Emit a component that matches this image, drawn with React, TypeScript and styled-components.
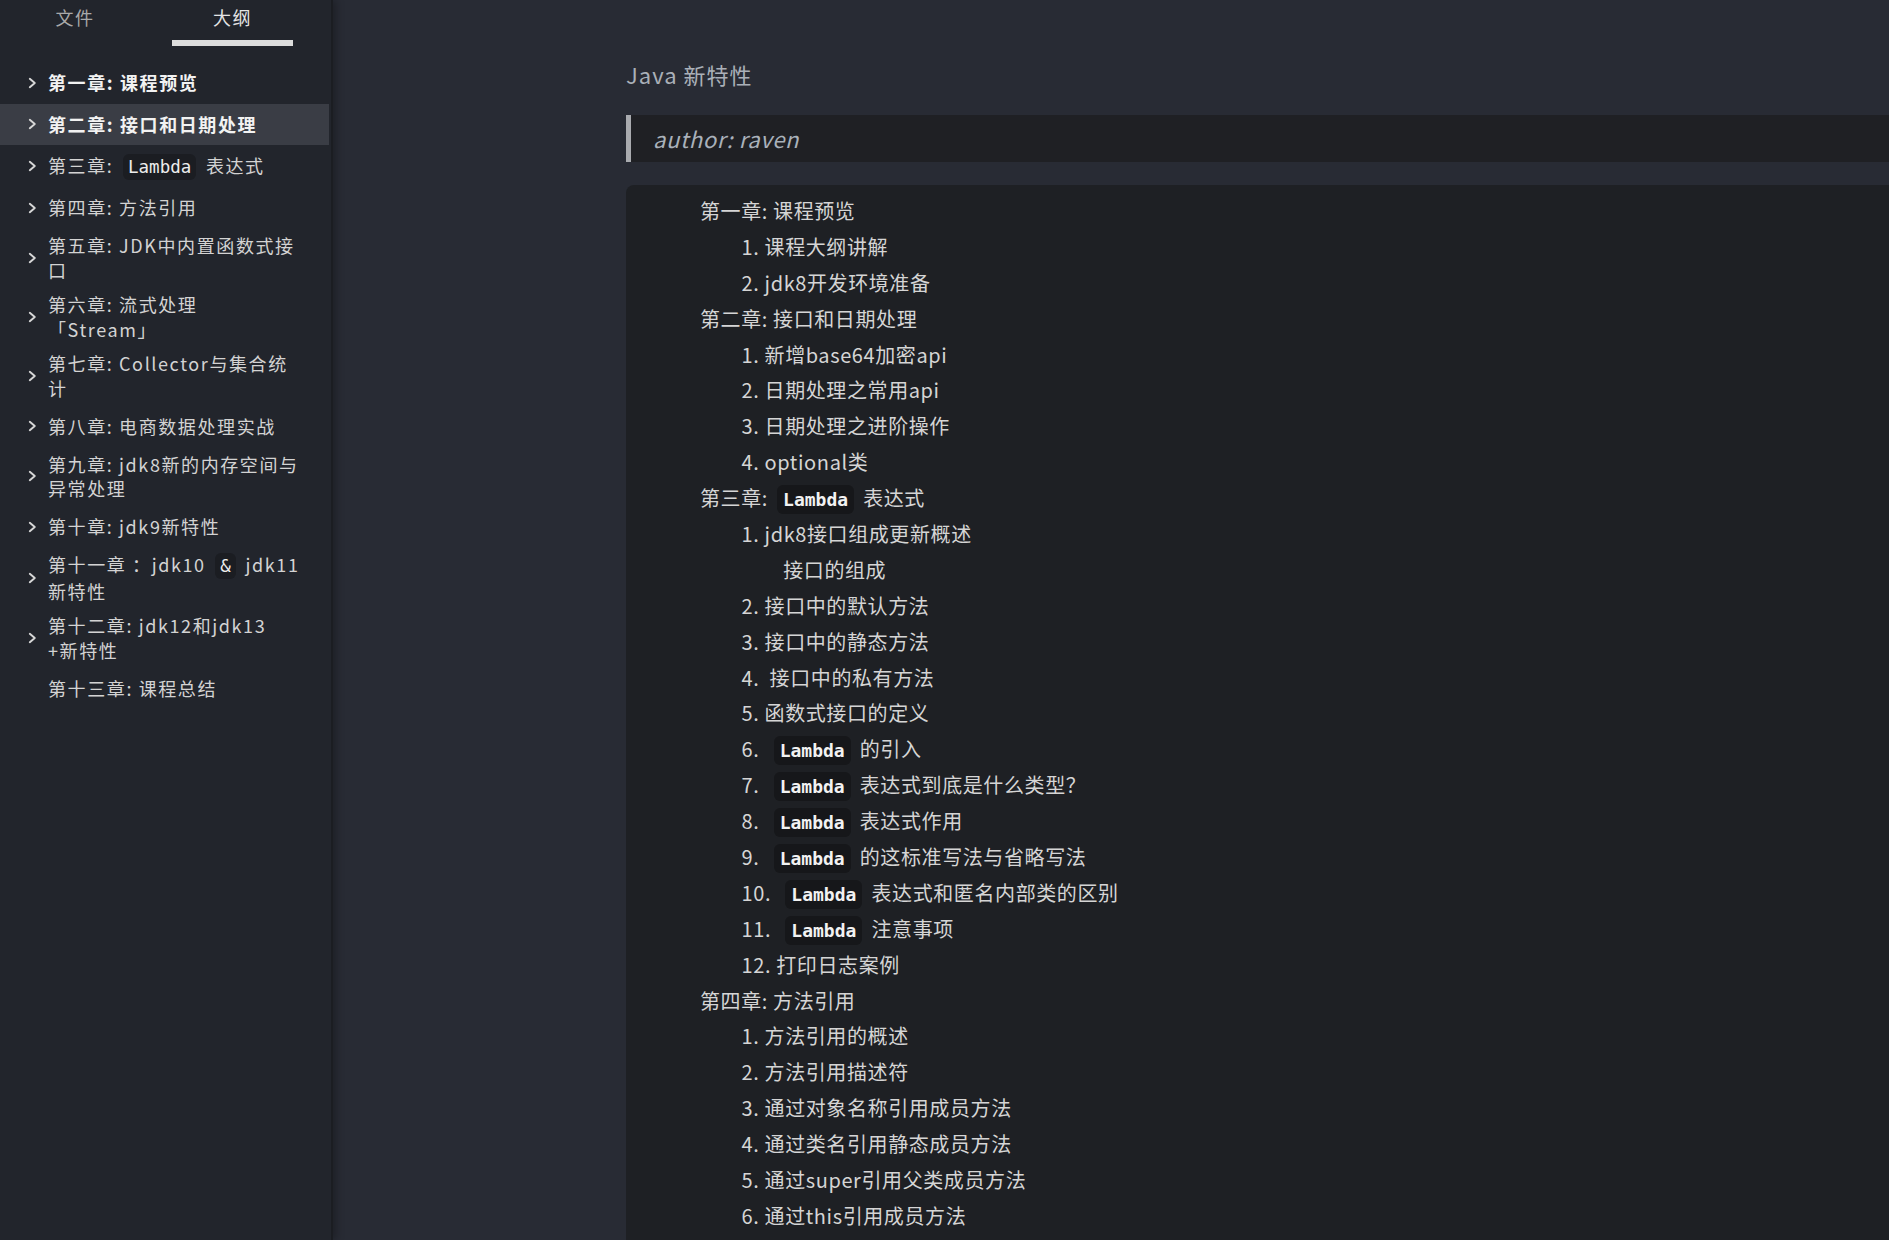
import React from "react";
import styled, { createGlobalStyle } from "styled-components";

const GlobalStyle = createGlobalStyle`
  html, body {
    margin: 0;
    padding: 0;
    background: #282b34;
    overflow: hidden;
  }
  * { box-sizing: border-box; }
`;

const Layout = styled.div`
  display: flex;
  width: 1889px;
  height: 1240px;
  overflow: hidden;
  background: #282b34;
  font-family: "Noto Sans CJK SC", "Noto Sans", sans-serif;
`;

const Sidebar = styled.aside`
  flex: 0 0 333px;
  width: 333px;
  background: #22252c;
  border-right: 2px solid #1b1d22;
  box-shadow: 3px 0 8px rgba(0, 0, 0, 0.28);
  position: relative;
  z-index: 1;
  display: flex;
  flex-direction: column;
`;

const Tabs = styled.div`
  display: flex;
  gap: 22px;
  height: 46px;
`;

const Tab = styled.div<{ $active?: boolean; $width: number }>`
  width: ${(p) => p.$width}px;
  height: 46px;
  padding-top: 3px;
  text-align: center;
  font-size: 18px;
  letter-spacing: 1.5px;
  line-height: 28px;
  color: ${(p) => (p.$active ? "#e4e4e4" : "#a9a9a9")};
  border-bottom: 6px solid ${(p) => (p.$active ? "#dcdcdc" : "transparent")};
`;

const OutlineList = styled.div`
  margin-top: 16px;
  display: flex;
  flex-direction: column;
`;

const OutlineRow = styled.div<{ $active?: boolean; $weight: number }>`
  display: flex;
  align-items: center;
  min-height: 41.6px;
  margin-right: 2px;
  padding: 4.7px 12px 4.7px 28px;
  background: ${(p) => (p.$active ? "#3a3d45" : "transparent")};
  color: ${(p) => (p.$weight > 400 ? "#f2f2f2" : "#d3d3d3")};
  font-weight: ${(p) => p.$weight};
  font-size: 18px;
  letter-spacing: 1.6px;
  line-height: 24.8px;
`;

const ChevronBox = styled.span`
  flex: 0 0 9px;
  width: 9px;
  margin-right: 11px;
  display: flex;
  align-items: center;
  justify-content: flex-start;
`;

const RowText = styled.span`
  flex: 1;
  min-width: 0;
  display: flex;
  flex-direction: column;
`;

const RowLine = styled.span`
  display: block;
  white-space: pre;
`;

const SideCode = styled.code`
  font-family: "DejaVu Sans Mono", "Liberation Mono", monospace;
  font-size: 17.5px;
  letter-spacing: 0;
  color: #ececec;
  background: #1b1d22;
  border-radius: 6px;
  padding: 3px 5px;
  margin: 0 4px;
`;

const Main = styled.main`
  flex: 1;
  min-width: 0;
  display: flex;
  flex-direction: column;
  padding: 56px 0 0 293px;
`;

const Title = styled.div`
  font-size: 22px;
  line-height: 36px;
  letter-spacing: 1px;
  color: #aab0b8;
  margin-bottom: 23px;
`;

const Quote = styled.blockquote`
  margin: 0 0 23px 0;
  border-left: 5px solid #a9abaf;
  background: #1f2024;
  padding: 10px 0 10px 22px;
  font-size: 22px;
  line-height: 27px;
  font-style: italic;
  letter-spacing: 0.6px;
  color: #a9b1ba;
`;

const Panel = styled.div`
  flex: 1;
  background: #1e2024;
  border-radius: 8px 0 0 0;
  padding: 8px 0 0 74px;
`;

const Line = styled.div<{ $level: number }>`
  padding-left: ${(p) => p.$level * 41.6}px;
  height: 35.9px;
  line-height: 35.9px;
  font-size: 20px;
  letter-spacing: 0.6px;
  color: #d5d5d5;
  white-space: pre;
`;

const MainCode = styled.code`
  font-family: "DejaVu Sans Mono", "Liberation Mono", monospace;
  font-size: 18px;
  font-weight: bold;
  letter-spacing: 0;
  color: #f2f2f2;
  background: #16171a;
  border-radius: 6px;
  padding: 4px 6px;
  margin: 0 4px;
`;

const Chevron = () => (
  <svg width="9" height="12" viewBox="0 0 9 12" fill="none">
    <path d="M1.8 1.8 L6.8 6 L1.8 10.2" stroke="#d8d8d8" strokeWidth="1.9" strokeLinecap="round" strokeLinejoin="round" />
  </svg>
);

type Part = string | { code: string };

interface OutlineItem {
  lines: Part[][];
  weight?: number;
  active?: boolean;
  leaf?: boolean;
}

const outline: OutlineItem[] = [
  { lines: [["第一章: 课程预览"]], weight: 700 },
  { lines: [["第二章: 接口和日期处理"]], weight: 600, active: true },
  { lines: [["第三章: ", { code: "Lambda" }, " 表达式"]] },
  { lines: [["第四章: 方法引用"]] },
  { lines: [["第五章: JDK中内置函数式接"], ["口"]] },
  { lines: [["第六章: 流式处理"], ["「Stream」"]] },
  { lines: [["第七章: Collector与集合统"], ["计"]] },
  { lines: [["第八章: 电商数据处理实战"]] },
  { lines: [["第九章: jdk8新的内存空间与"], ["异常处理"]] },
  { lines: [["第十章: jdk9新特性"]] },
  { lines: [["第十一章 ：jdk10 ", { code: "&" }, " jdk11"], ["新特性"]] },
  { lines: [["第十二章: jdk12和jdk13"], ["+新特性"]] },
  { lines: [["第十三章: 课程总结"]], leaf: true },
];

interface ContentLine {
  level: number;
  parts: Part[];
}

const L = "Lambda";

const content: ContentLine[] = [
  { level: 0, parts: ["第一章: 课程预览"] },
  { level: 1, parts: ["1. 课程大纲讲解"] },
  { level: 1, parts: ["2. jdk8开发环境准备"] },
  { level: 0, parts: ["第二章: 接口和日期处理"] },
  { level: 1, parts: ["1. 新增base64加密api"] },
  { level: 1, parts: ["2. 日期处理之常用api"] },
  { level: 1, parts: ["3. 日期处理之进阶操作"] },
  { level: 1, parts: ["4. optional类"] },
  { level: 0, parts: ["第三章: ", { code: L }, " 表达式"] },
  { level: 1, parts: ["1. jdk8接口组成更新概述"] },
  { level: 2, parts: ["接口的组成"] },
  { level: 1, parts: ["2. 接口中的默认方法"] },
  { level: 1, parts: ["3. 接口中的静态方法"] },
  { level: 1, parts: ["4.  接口中的私有方法"] },
  { level: 1, parts: ["5. 函数式接口的定义"] },
  { level: 1, parts: ["6.  ", { code: L }, " 的引入"] },
  { level: 1, parts: ["7.  ", { code: L }, " 表达式到底是什么类型？"] },
  { level: 1, parts: ["8.  ", { code: L }, " 表达式作用"] },
  { level: 1, parts: ["9.  ", { code: L }, " 的这标准写法与省略写法"] },
  { level: 1, parts: ["10.  ", { code: L }, " 表达式和匿名内部类的区别"] },
  { level: 1, parts: ["11.  ", { code: L }, " 注意事项"] },
  { level: 1, parts: ["12. 打印日志案例"] },
  { level: 0, parts: ["第四章: 方法引用"] },
  { level: 1, parts: ["1. 方法引用的概述"] },
  { level: 1, parts: ["2. 方法引用描述符"] },
  { level: 1, parts: ["3. 通过对象名称引用成员方法"] },
  { level: 1, parts: ["4. 通过类名引用静态成员方法"] },
  { level: 1, parts: ["5. 通过super引用父类成员方法"] },
  { level: 1, parts: ["6. 通过this引用成员方法"] },
];

function renderParts(parts: Part[], Code: typeof SideCode) {
  return parts.map((p, j) =>
    typeof p === "string" ? <React.Fragment key={j}>{p}</React.Fragment> : <Code key={j}>{p.code}</Code>
  );
}

export default function App() {
  return (
    <>
      <GlobalStyle />
      <Layout>
        <Sidebar>
          <Tabs>
            <Tab $width={150}>文件</Tab>
            <Tab $width={121} $active>
              大纲
            </Tab>
          </Tabs>
          <OutlineList>
            {outline.map((item, i) => (
              <OutlineRow key={i} $active={item.active} $weight={item.weight ?? 400}>
                <ChevronBox>{item.leaf ? null : <Chevron />}</ChevronBox>
                <RowText>
                  {item.lines.map((ln, k) => (
                    <RowLine key={k}>{renderParts(ln, SideCode)}</RowLine>
                  ))}
                </RowText>
              </OutlineRow>
            ))}
          </OutlineList>
        </Sidebar>
        <Main>
          <Title>Java 新特性</Title>
          <Quote>author: raven</Quote>
          <Panel>
            {content.map((line, i) => (
              <Line key={i} $level={line.level}>
                {renderParts(line.parts, MainCode)}
              </Line>
            ))}
          </Panel>
        </Main>
      </Layout>
    </>
  );
}
